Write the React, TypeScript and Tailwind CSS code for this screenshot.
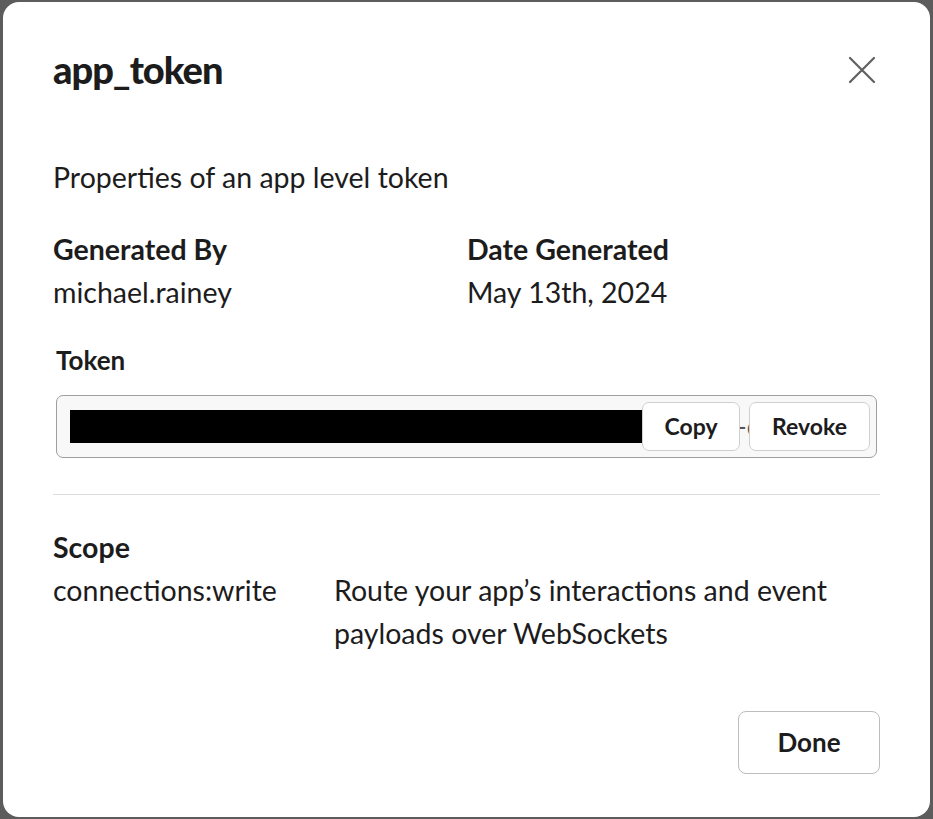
import React from 'react';

function CloseIcon() {
  return (
    <svg width="28" height="28" viewBox="0 0 28 28" fill="none" stroke="#616061" strokeWidth={2.2} strokeLinecap="round">
      <path d="M2 2 L26 26 M26 2 L2 26" />
    </svg>
  );
}

export default function App() {
  return (
    <div className="w-[933px] h-[819px] bg-[#5c5c5c] pt-[2px] pl-[3px] font-['Lato',sans-serif] text-[#1d1c1d]">
      <div className="w-[927px] h-[815px] rounded-[16px] bg-white pt-[47px] px-[50px]">
        {/* Header */}
        <div className="flex items-center justify-between h-[40px]">
          <h1 className="text-[38px] leading-[40px] font-black tracking-[-1px]">app_token</h1>
          <button className="mr-[4px] mt-[1px]">
            <CloseIcon />
          </button>
        </div>

        <p className="mt-[67px] text-[28.5px] leading-[43px]">Properties of an app level token</p>

        {/* Generated by / date */}
        <div className="mt-[29px] flex text-[28.5px] leading-[43px]">
          <div className="w-[414px]">
            <div className="font-bold">Generated By</div>
            <div>michael.rainey</div>
          </div>
          <div>
            <div className="font-bold">Date Generated</div>
            <div>May 13th, 2024</div>
          </div>
        </div>

        {/* Token */}
        <div className="mt-[25px] ml-[3px] text-[26px] leading-[43px] font-bold">Token</div>
        <div className="relative mt-[13px] ml-[3px] mr-[3px] h-[63px] rounded-[7px] border-[1.5px] border-[#9e9e9e] bg-[#f8f8f8] overflow-hidden">
          <div className="flex items-center h-full pl-[13px] text-[26px] text-[#555]">
            <div className="w-[575px] h-[33px] bg-black shrink-0" />
            <span className="ml-[92px] whitespace-nowrap">-c</span>
          </div>
          <div className="absolute right-[6px] top-[5.5px] flex gap-[9px]">
            <button className="w-[98px] h-[49px] rounded-[7px] border-[1.5px] border-[#cfcfcf] bg-white text-[23px] font-bold">
              Copy
            </button>
            <button className="w-[121px] h-[49px] rounded-[7px] border-[1.5px] border-[#cfcfcf] bg-white text-[23px] font-bold">
              Revoke
            </button>
          </div>
        </div>

        <div className="mt-[36px] h-px bg-[#dddddd]" />

        {/* Scope */}
        <div className="mt-[31px] text-[28.5px] leading-[43px]">
          <div className="font-bold">Scope</div>
          <div className="flex">
            <div className="w-[281px] shrink-0">connections:write</div>
            <div className="w-[520px]">Route your app’s interactions and event payloads over WebSockets</div>
          </div>
        </div>

        <div className="mt-[56px] flex justify-end">
          <button className="w-[142px] h-[63px] rounded-[8px] border-[1.5px] border-[#bdbdbd] bg-white text-[26px] font-bold">
            Done
          </button>
        </div>
      </div>
    </div>
  );
}
